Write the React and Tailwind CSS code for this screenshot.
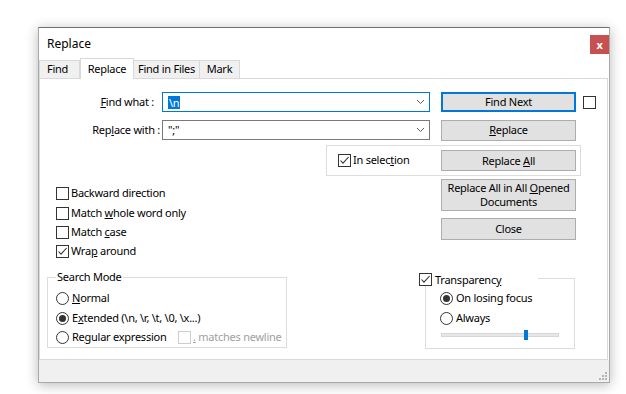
import React from 'react';

const Check = ({ checked, disabled }) => (
  <span
    className={`w-[13px] h-[13px] shrink-0 border bg-white flex items-center justify-center ${
      disabled ? 'border-[#cccccc]' : 'border-[#333333]'
    }`}
  >
    {checked && (
      <svg width="11" height="11" viewBox="0 0 11 11">
        <path d="M1.5 5.5 L4 8.2 L9.6 2" stroke="#333333" strokeWidth="1.1" fill="none" />
      </svg>
    )}
  </span>
);

const Radio = ({ checked }) => (
  <span className="w-[13px] h-[13px] shrink-0 rounded-full border border-[#333333] bg-white flex items-center justify-center">
    {checked && <span className="w-[7px] h-[7px] rounded-full bg-[#333333]" />}
  </span>
);

const Chevron = () => (
  <svg width="9" height="6" viewBox="0 0 9 6" className="ml-auto mr-[4px]">
    <path d="M1 1 L4.5 4.5 L8 1" stroke="#5f5f5f" strokeWidth="1" fill="none" />
  </svg>
);

const Button = ({ children, focused, className = '' }) => (
  <div
    className={`w-[135px] bg-[#e1e1e1] flex items-center justify-center text-center leading-[14px] ${
      focused ? 'border-2 border-[#0078d7]' : 'border border-[#adadad]'
    } ${className}`}
  >
    {children}
  </div>
);

const CheckRow = ({ checked, children, className = '' }) => (
  <div className={`flex items-center gap-[2px] whitespace-nowrap ${className}`}>
    <Check checked={checked} />
    <span>{children}</span>
  </div>
);

const RadioRow = ({ checked, children, className = '' }) => (
  <div className={`flex items-center gap-[3px] whitespace-nowrap ${className}`}>
    <Radio checked={checked} />
    <span>{children}</span>
  </div>
);

export default function App() {
  return (
    <div className="w-[626px] h-[394px] bg-white pl-[38px] pt-[27px] font-['Noto_Sans',sans-serif] text-[11px] tracking-[-0.25px] text-black">
      <div className="w-[572px] h-[356px] bg-white border border-[#a9a9a9] border-t-[#707070] shadow-[0_2px_12px_rgba(0,0,0,0.28)] flex flex-col">
        {/* title bar */}
        <div className="h-[30px] flex items-start shrink-0">
          <span className="ml-[8px] mt-[7px] text-[12px] tracking-normal">Replace</span>
          <div className="ml-auto mt-[7px] w-[19px] h-[19px] bg-[#c75050] text-white font-bold text-[11px] leading-none flex items-center justify-center">
            x
          </div>
        </div>

        {/* tabs */}
        <div className="h-[20px] flex items-end shrink-0 relative z-10">
          <div className="h-[18px] w-[41px] bg-[#f0f0f0] border border-[#d9d9d9] border-b-0 flex items-center pl-[7px]">Find</div>
          <div className="h-[21px] w-[54px] bg-white border border-[#d9d9d9] border-b-0 mb-[-1px] flex items-center justify-center">Replace</div>
          <div className="h-[18px] w-[66px] bg-[#f0f0f0] border border-[#d9d9d9] border-b-0 border-l-0 flex items-center justify-center">Find in Files</div>
          <div className="h-[18px] w-[40px] bg-[#f0f0f0] border border-[#d9d9d9] border-b-0 border-l-0 flex items-center justify-center">Mark</div>
        </div>

        {/* panel */}
        <div className="h-[282px] mr-[1px] border border-[#d9d9d9] bg-white shrink-0 pt-[13px]">
          {/* find what */}
          <div className="flex items-center h-[20px]">
            <span className="w-[122px] text-right pr-[8px]">
              <u>F</u>ind what :
            </span>
            <div className="w-[268px] h-[20px] border border-[#0078d7] flex items-center pl-[5px]">
              <span className="bg-[#0078d7] text-white px-[1px] leading-[13px]">\n</span>
              <Chevron />
            </div>
            <Button focused className="ml-[11px] h-[20px]">Find Next</Button>
            <span className="ml-[7px]">
              <Check />
            </span>
          </div>

          {/* replace with */}
          <div className="flex items-center h-[20px] mt-[8px]">
            <span className="w-[122px] text-right pr-[2px]">
              Rep<u>l</u>ace with :
            </span>
            <div className="w-[268px] h-[20px] border border-[#7a7a7a] flex items-center pl-[5px]">
              <span>";"</span>
              <Chevron />
            </div>
            <Button className="ml-[11px] h-[21px]">
              <span>
                <u>R</u>eplace
              </span>
            </Button>
          </div>

          {/* in selection */}
          <div className="ml-[286px] mt-[5px] w-[255px] h-[31px] border border-[#dcdcdc] flex items-center pl-[11px]">
            <CheckRow checked>
              In selec<u>t</u>ion
            </CheckRow>
            <Button className="ml-auto mr-[4px] h-[21px]">
              <span>
                Replace <u>A</u>ll
              </span>
            </Button>
          </div>

          {/* lower area */}
          <div className="flex">
            <div className="w-[379px] pt-[8px]">
              <div className="pl-[16px]">
                <CheckRow className="h-[19px]">Backward direction</CheckRow>
                <CheckRow className="h-[20px]">
                  Match <u>w</u>hole word only
                </CheckRow>
                <CheckRow className="h-[19px]">
                  Match <u>c</u>ase
                </CheckRow>
                <CheckRow checked className="h-[19px]">
                  Wra<u>p</u> around
                </CheckRow>
              </div>

              <div className="relative ml-[7px] mt-[16px] w-[240px] h-[71px] border border-[#dcdcdc] pl-[8px] pt-[14px]">
                <span className="absolute left-[8px] top-[-9px] bg-white px-[1px] leading-[16px]">Search Mode</span>
                <RadioRow className="h-[13px]">
                  <u>N</u>ormal
                </RadioRow>
                <RadioRow checked className="h-[13px] mt-[7px]">
                  E<u>x</u>tended (\n, \r, \t, \0, \x...)
                </RadioRow>
                <div className="flex items-center h-[13px] mt-[6px]">
                  <RadioRow>
                    Re<u>g</u>ular expression
                  </RadioRow>
                  <div className="absolute left-[130px] flex items-center gap-[2px] whitespace-nowrap text-[#a0a0a0]">
                    <Check disabled />
                    <span>
                      <u>.</u> matches newline
                    </span>
                  </div>
                </div>
              </div>
            </div>

            <div className="flex flex-col">
              <Button className="ml-[22px] mt-[3px] h-[32px]">
                <span>
                  Replace All in All <u>O</u>pened
                  <br />
                  Documents
                </span>
              </Button>
              <Button className="ml-[22px] mt-[7px] h-[22px]">Close</Button>

              <div className="relative ml-[6px] mt-[38px] w-[150px] h-[71px] border border-[#dcdcdc] pl-[14px] pt-[13px]">
                <div className="absolute left-[-7px] top-[-6px] w-[119px] bg-white flex items-center gap-[3px] leading-[13px]">
                  <Check checked />
                  <span>
                    Transparenc<u>y</u>
                  </span>
                </div>
                <RadioRow checked className="h-[13px]">On losing focus</RadioRow>
                <RadioRow className="h-[13px] mt-[7px]">Always</RadioRow>
                <div className="relative mt-[8px] ml-[1px] w-[118px] h-[4px] bg-[#e7e7e7] border border-[#d6d6d6]">
                  <span className="absolute left-[82px] top-[-4px] w-[4px] h-[10px] bg-[#0078d7]" />
                </div>
              </div>
            </div>
          </div>
        </div>

        {/* status strip */}
        <div className="flex-1 bg-[#f0f0f0] flex items-end justify-end pr-[2px] pb-[2px]">
          <svg width="8" height="8" viewBox="0 0 8 8">
            <rect x="6" y="0" width="2" height="2" fill="#b4b4b4" />
            <rect x="3" y="3" width="2" height="2" fill="#b4b4b4" />
            <rect x="6" y="3" width="2" height="2" fill="#b4b4b4" />
            <rect x="0" y="6" width="2" height="2" fill="#b4b4b4" />
            <rect x="3" y="6" width="2" height="2" fill="#b4b4b4" />
            <rect x="6" y="6" width="2" height="2" fill="#b4b4b4" />
          </svg>
        </div>
      </div>
    </div>
  );
}
